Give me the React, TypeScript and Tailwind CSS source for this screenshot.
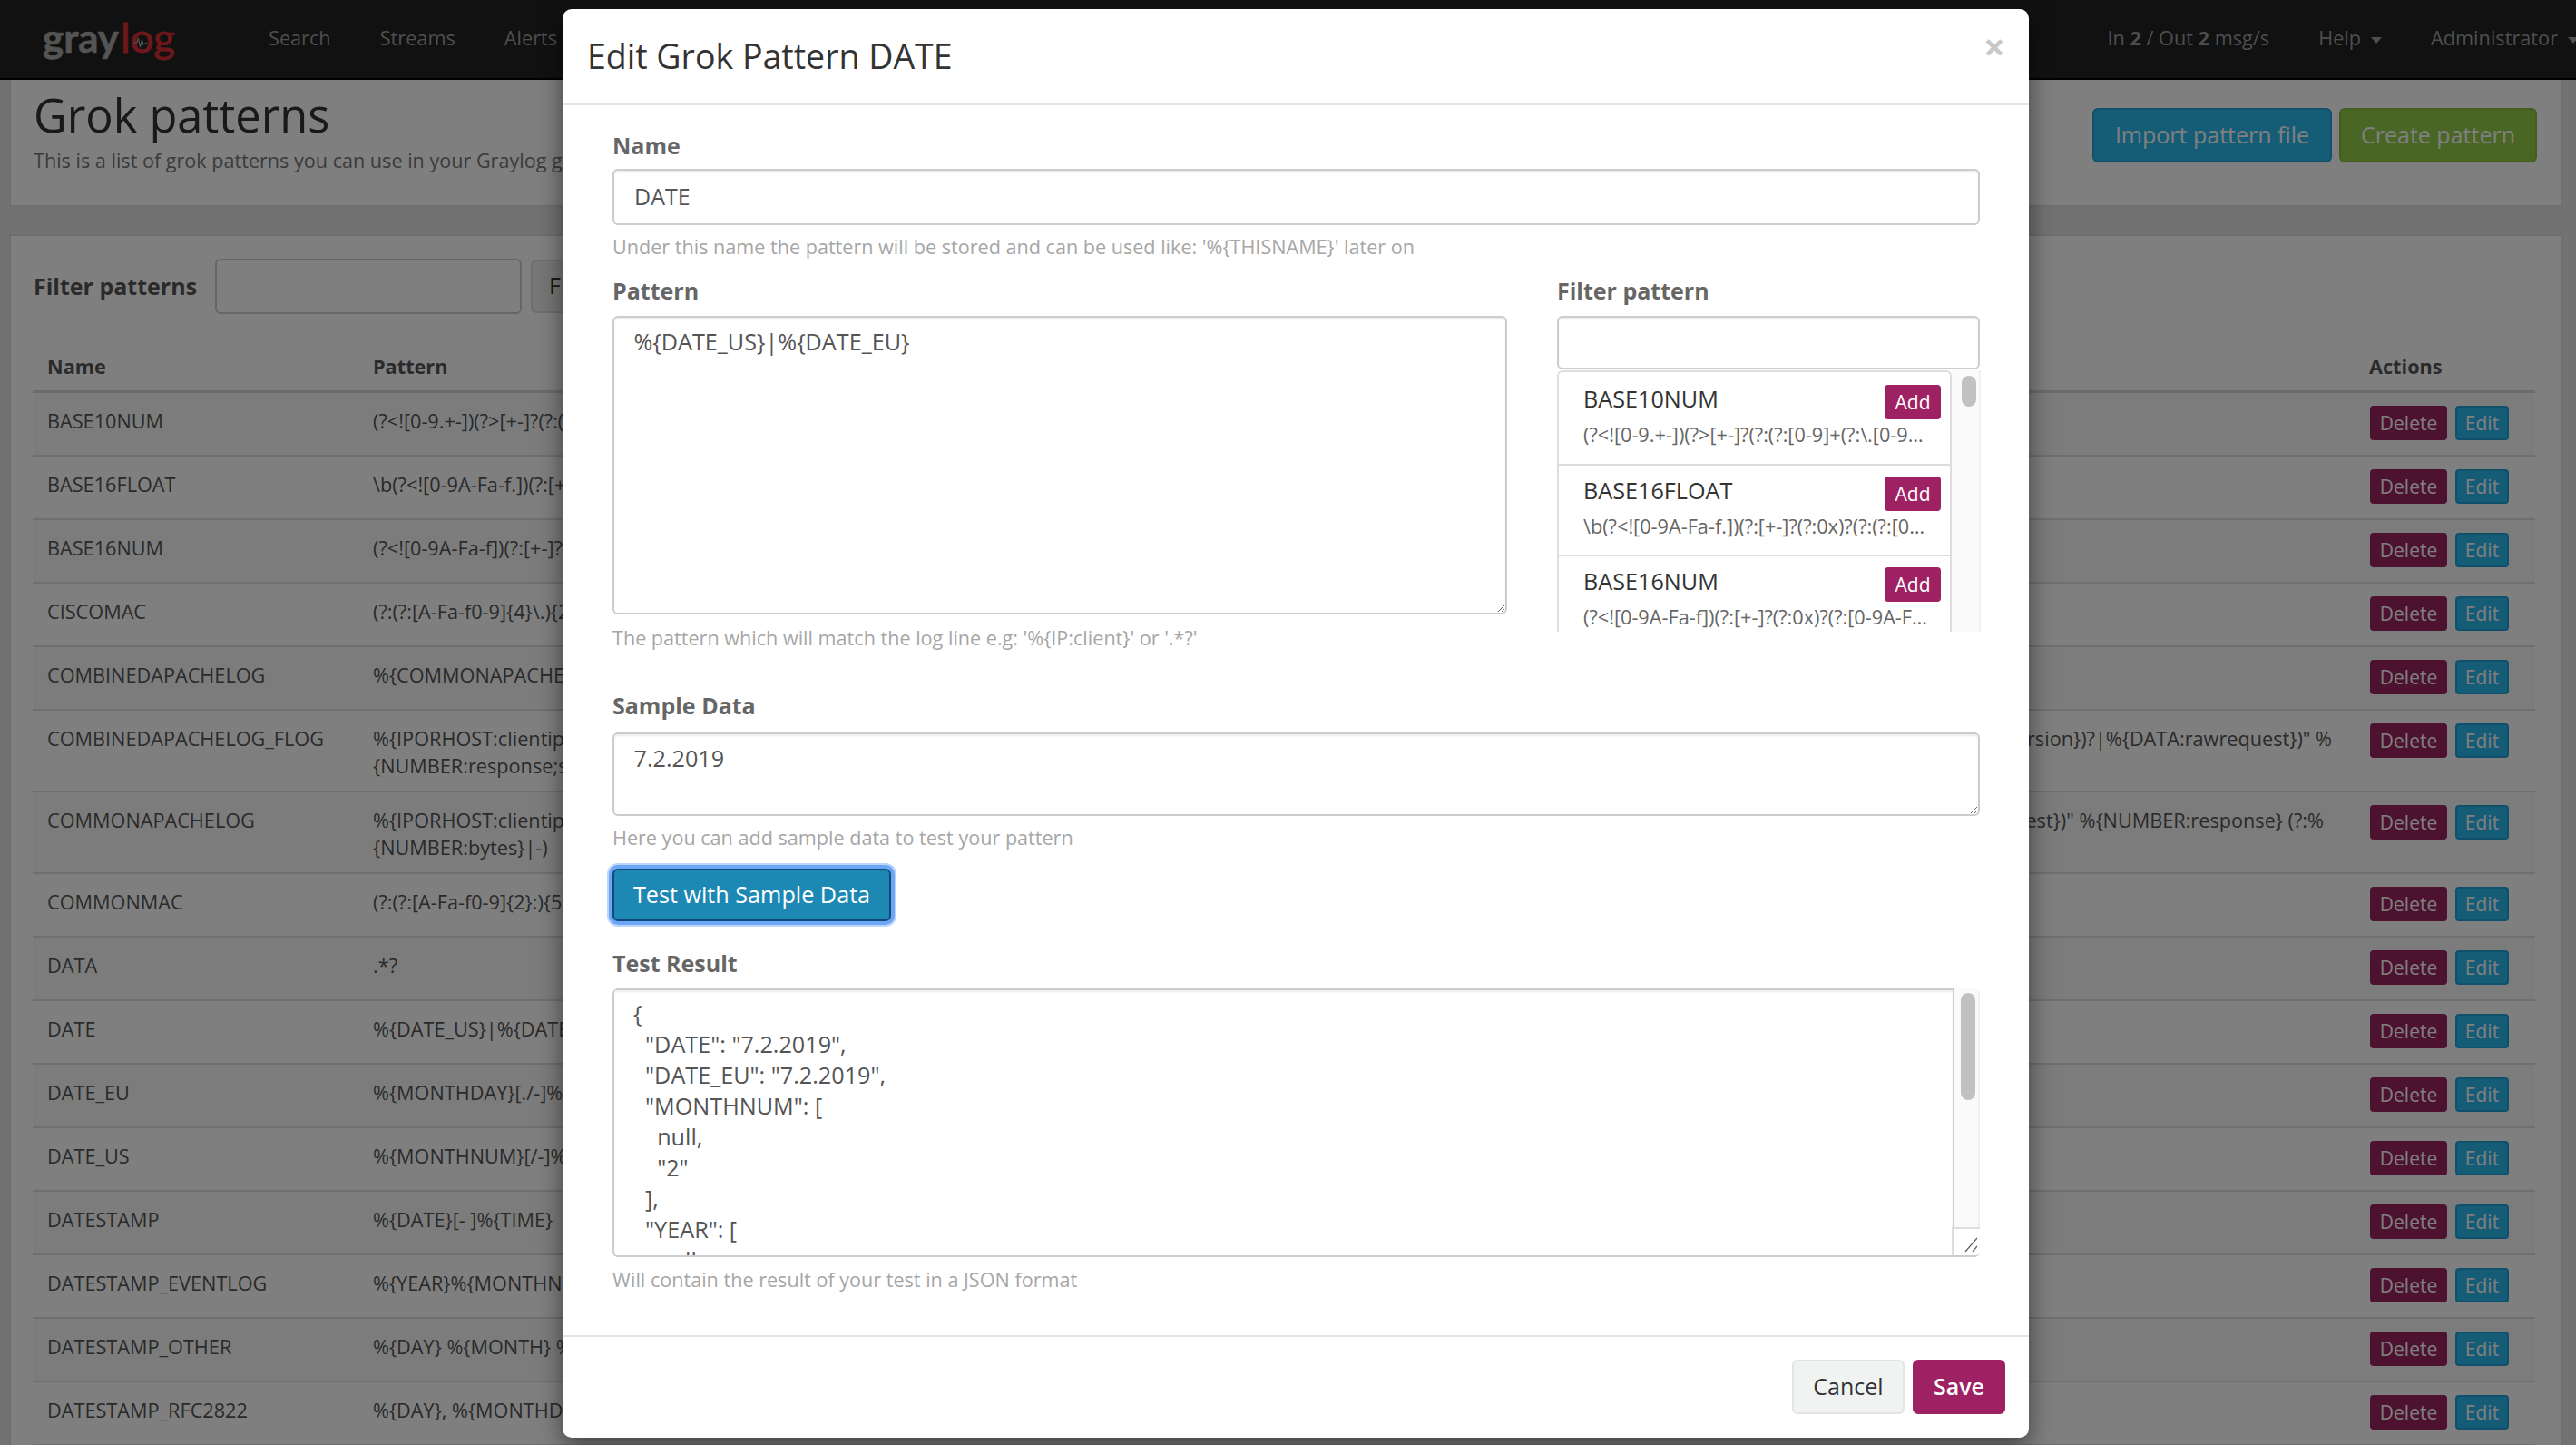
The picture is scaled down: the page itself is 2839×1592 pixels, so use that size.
import React from "react";

const rows: { name: string; lines: string[]; tail?: string; pr?: string }[] = [
  { name: "BASE10NUM", lines: ["(?<![0-9.+-])(?>[+-]?(?:(?:[0-9]+(?:\\.[0-9]+)?)|(?:\\.[0-9]+)))"] },
  { name: "BASE16FLOAT", lines: ["\\b(?<![0-9A-Fa-f.])(?:[+-]?(?:0x)?(?:(?:[0-9A-Fa-f]+(?:\\.[0-9A-Fa-f]*)?)|(?:\\.[0-9A-Fa-f]+)))\\b"] },
  { name: "BASE16NUM", lines: ["(?<![0-9A-Fa-f])(?:[+-]?(?:0x)?(?:[0-9A-Fa-f]+))"] },
  { name: "CISCOMAC", lines: ["(?:(?:[A-Fa-f0-9]{4}\\.){2}[A-Fa-f0-9]{4})"] },
  { name: "COMBINEDAPACHELOG", lines: ["%{COMMONAPACHELOG} %{QS:referrer} %{QS:agent}"] },
  {
    name: "COMBINEDAPACHELOG_FLOG",
    lines: [
      '%{IPORHOST:clientip} %{USER:ident;boolean} %{USER:auth} \\[%{HTTPDATE:timestamp;date;dd/MMM/yyyy:HH:mm:ss Z}\\] "(?:%{WORD:verb;string} %{URIPATHPARAM:request}(?: HTTP/%{NUMBER:httpve',
      "{NUMBER:response;string} (?:%{NUMBER:bytes;long}|-)",
    ],
    tail: 'rsion})?|%{DATA:rawrequest})" %',
    pr: "pr-[41px]",
  },
  {
    name: "COMMONAPACHELOG",
    lines: [
      '%{IPORHOST:clientip} %{USER:ident} %{USER:auth} \\[%{HTTPDATE:timestamp}\\] "(?:%{WORD:verb} %{NOTSPACE:request}(?: HTTP/%{NUMBER:httpversion})?|%{DATA:rawrequ',
      "{NUMBER:bytes}|-)",
    ],
    tail: 'est})" %{NUMBER:response} (?:%',
    pr: "pr-[50px]",
  },
  { name: "COMMONMAC", lines: ["(?:(?:[A-Fa-f0-9]{2}:){5}[A-Fa-f0-9]{2})"] },
  { name: "DATA", lines: [".*?"] },
  { name: "DATE", lines: ["%{DATE_US}|%{DATE_EU}"] },
  { name: "DATE_EU", lines: ["%{MONTHDAY}[./-]%{MONTHNUM}[./-]%{YEAR}"] },
  { name: "DATE_US", lines: ["%{MONTHNUM}[/-]%{MONTHDAY}[/-]%{YEAR}"] },
  { name: "DATESTAMP", lines: ["%{DATE}[- ]%{TIME}"] },
  { name: "DATESTAMP_EVENTLOG", lines: ["%{YEAR}%{MONTHNUM2}%{MONTHDAY}%{HOUR}%{MINUTE}%{SECOND}"] },
  { name: "DATESTAMP_OTHER", lines: ["%{DAY} %{MONTH} %{MONTHDAY} %{TIME} %{TZ} %{YEAR}"] },
  { name: "DATESTAMP_RFC2822", lines: ["%{DAY}, %{MONTHDAY} %{MONTH} %{YEAR} %{TIME} %{ISO8601_TIMEZONE}"] },
];

const grokList = [
  { name: "BASE10NUM", desc: "(?<![0-9.+-])(?>[+-]?(?:(?:[0-9]+(?:\\.[0-9]+)?)|(?:\\.[0-9]+)))", h: "h-[101px]", t: "pt-[14px]" },
  { name: "BASE16FLOAT", desc: "\\b(?<![0-9A-Fa-f.])(?:[+-]?(?:0x)?(?:(?:[0-9A-Fa-f]+(?:\\.[0-9A-Fa-f]*)?)", h: "h-[100px]", t: "pt-[12px]" },
  { name: "BASE16NUM", desc: "(?<![0-9A-Fa-f])(?:[+-]?(?:0x)?(?:[0-9A-Fa-f]+))", h: "h-[100px]", t: "pt-[12px]" },
];

const json = `{
  "DATE": "7.2.2019",
  "DATE_EU": "7.2.2019",
  "MONTHNUM": [
    null,
    "2"
  ],
  "YEAR": [
    null,`;

function Caret() {
  return <span className="ml-[11px] inline-block h-0 w-0 border-x-[6.5px] border-t-[7px] border-x-transparent border-t-current align-middle" />;
}

function Logo() {
  return (
    <svg width="150" height="50" viewBox="0 0 150 50" className="block">
      <text x="0" y="36" fontFamily="Lato, sans-serif" fontWeight="700" fontSize="44" fill="#a8a8a8" stroke="#a8a8a8" strokeWidth="0.6" textLength="84" lengthAdjust="spacingAndGlyphs">gray</text>
      <text x="86" y="36" fontFamily="Lato, sans-serif" fontWeight="400" fontSize="44" fill="#dc2f35" stroke="#dc2f35" strokeWidth="0.8" textLength="60" lengthAdjust="spacingAndGlyphs">log</text>
      <polyline points="100,25 104,25 105.5,20 107.5,30 109.5,22 111,27 115,25" fill="none" stroke="#a8a8a8" strokeWidth="1.2" />
    </svg>
  );
}

function Label({ children, className = "" }: { children: React.ReactNode; className?: string }) {
  return <label className={`block h-[36px] text-[25px] font-bold leading-[33px] text-[#666] ${className}`}>{children}</label>;
}

function Help({ children, className = "" }: { children: React.ReactNode; className?: string }) {
  return <p className={`h-[36px] text-[21.6px] leading-[33px] text-[#a6a6a6] ${className}`}>{children}</p>;
}

export default function App() {
  return (
    <div className="relative h-[1592px] w-[2839px] overflow-hidden bg-[#e4e4e4] font-['Open_Sans',sans-serif] text-[#333]">
      <nav className="flex h-[88px] items-start justify-between border-b-2 border-black bg-[#222] pl-[47px] text-[21.7px] leading-[84px] text-[#9d9d9d]">
        <div className="flex items-start">
          <div className="mt-[22px] mr-[99px]"><Logo /></div>
          <div className="flex gap-[54px]">
            <span>Search</span>
            <span>Streams</span>
            <span>Alerts</span>
          </div>
        </div>
        <div className="mr-[-3px] flex gap-[54px]">
          <span>In <b>2</b> / Out <b>2</b> msg/s</span>
          <span>Help<Caret /></span>
          <span>Administrator<Caret /></span>
        </div>
      </nav>

      <section className="mr-[15px] ml-[10px] flex h-[140px] justify-between border-2 border-t-0 border-[#dcdcdc] bg-white pr-[26px] pl-[25px]">
        <div className="pt-[9px]">
          <h1 className="text-[50.5px] leading-[60px] font-normal text-[#333]">Grok patterns</h1>
          <p className="mt-[5px] text-[21.6px] leading-[30px] text-[#777]">This is a list of grok patterns you can use in your Graylog grok extractors. You can add your own manually or import a whole list of patterns from a so called pattern file.</p>
        </div>
        <div className="flex shrink-0 gap-[8px] pt-[31px]">
          <button className="h-[60px] w-[264px] rounded-[6px] border-2 border-[#1fa2d6] bg-[#2ab8ee] text-[25px] text-white">Import pattern file</button>
          <button className="h-[60px] w-[218px] rounded-[6px] border-2 border-[#86bb40] bg-[#94cc4a] text-[25px] text-white">Create pattern</button>
        </div>
      </section>

      <section className="mt-[30px] mr-[15px] ml-[10px] h-[1400px] border-2 border-[#dcdcdc] bg-white pt-[24px] pr-[28px] pl-[24px]">
        <div className="flex h-[62px] items-center">
          <span className="w-[201px] pl-[1px] text-[25px] font-bold leading-[57px] text-[#555]">Filter patterns</span>
          <input className="h-[61px] w-[338px] rounded-[6px] border-2 border-[#ccc] bg-white" />
          <button className="ml-[10px] h-[59px] w-[120px] rounded-[6px] border-2 border-[#ddd] bg-[#eee] px-[18px] text-left text-[25px] text-[#333]">Filter</button>
        </div>
        <div className="flex h-[87px] items-end border-b-[3px] border-[#d8d8d8] pb-[11px] text-[21.7px] font-bold leading-[30px] text-[#555]">
          <div className="w-[375px] pl-[16px]">Name</div>
          <div className="flex-1">Pattern</div>
          <div className="w-[183px]">Actions</div>
        </div>
        {rows.map((r, i) => (
          <div
            key={r.name}
            className={`flex border-b-2 border-[#dedede] pt-[14px] text-[21.7px] leading-[30px] text-[#555] ${r.lines.length > 1 ? "h-[90px]" : "h-[70px]"} ${i % 2 === 0 ? "bg-[#f9f9f9]" : "bg-white"}`}
          >
            <div className="w-[375px] shrink-0 pt-[2px] pl-[16px]">{r.name}</div>
            <div className={`min-w-0 flex-1 whitespace-nowrap pt-[2px] ${r.pr ?? ""}`}>
              {r.lines.map((l, j) =>
                j === 0 && r.tail ? (
                  <div key={l} className="flex justify-between">
                    <span className="min-w-0 overflow-hidden">{l}</span>
                    <span className="shrink-0">{r.tail}</span>
                  </div>
                ) : (
                  <div key={l}>{l}</div>
                )
              )}
            </div>
            <div className="flex w-[183px] shrink-0 gap-[9px] pl-[1px]">
              <button className="h-[38px] w-[85px] rounded-[4px] bg-[#9a2460] text-[21px] leading-[36px] text-white">Delete</button>
              <button className="h-[38px] w-[59px] rounded-[4px] border-2 border-[#1fa2d6] bg-[#2ab8ee] text-[21px] leading-[32px] text-white">Edit</button>
            </div>
          </div>
        ))}
      </section>

      <div className="absolute inset-0 bg-black/50" />

      <div className="absolute top-[10px] left-[620px] flex h-[1574px] w-[1616px] flex-col rounded-[10px] bg-white shadow-[0_9px_27px_rgba(0,0,0,0.5)]">
        <header className="flex h-[106px] shrink-0 justify-between border-b-2 border-[#e5e5e5] pr-[26px] pl-[27px]">
          <h2 className="pt-[29px] text-[37.5px] leading-[46px] font-normal text-[#333]">Edit Grok Pattern DATE</h2>
          <span className="pt-[18px] text-[42px] leading-[46px] font-bold text-[#c8c8c8]">×</span>
        </header>

        <div className="flex-1 pt-[28px] pr-[54px] pl-[55px]">
          <Label className="mb-[6px]">Name</Label>
          <input readOnly value="DATE" className="h-[62px] w-full rounded-[6px] border-2 border-[#ccc] px-[22px] pb-[3px] text-[25px] text-[#555] shadow-[inset_0_2px_2px_rgba(0,0,0,0.075)] outline-none" />
          <Help className="mt-[7px]">Under this name the pattern will be stored and can be used like: '%{"{"}THISNAME{"}"}' later on</Help>

          <div className="mt-[13px] flex gap-[55px]">
            <div className="w-[986px] shrink-0">
              <Label className="mb-[8px]">Pattern</Label>
              <textarea readOnly value="%{DATE_US}|%{DATE_EU}" className="block h-[329px] w-full resize-y rounded-[6px] border-2 border-[#ccc] px-[21.5px] py-[8px] text-[25.2px] leading-[36px] text-[#555] shadow-[inset_0_2px_2px_rgba(0,0,0,0.075)] outline-none" />
              <Help className="mt-[9px]">The pattern which will match the log line e.g: '%{"{"}IP:client{"}"}' or '.*?'</Help>
            </div>
            <div className="w-[466px] shrink-0">
              <Label className="mb-[8px]">Filter pattern</Label>
              <input className="block h-[59px] w-[466px] rounded-[6px] border-2 border-[#ccc] shadow-[inset_0_2px_2px_rgba(0,0,0,0.075)] outline-none" />
              <div className="mt-[1px] flex h-[288px] w-[467px] overflow-hidden">
                <ul className="h-[400px] w-[435px] shrink-0 rounded-t-[6px] border-2 border-[#ddd]">
                  {grokList.map((g, i) => (
                    <li key={g.name} className={`${g.h} ${g.t} pr-[10px] pl-[27px] ${i > 0 ? "border-t-2 border-[#ddd]" : ""}`}>
                      <div className="flex items-start justify-between">
                        <span className="text-[25.2px] leading-[31px] text-[#333]">{g.name}</span>
                        <button className="h-[38px] w-[62px] rounded-[4px] bg-[#9e2163] text-[21px] font-medium leading-[36px] text-white">Add</button>
                      </div>
                      <div className="mt-[2px] w-[379px] truncate text-[21.7px] leading-[30px] text-[#666]">{g.desc}</div>
                    </li>
                  ))}
                </ul>
                <div className="h-full w-[32px] border-x-2 border-l-0 border-[#f0f0f0] bg-[#fafafa] pt-[6px] pl-[11px]">
                  <div className="h-[34px] w-[16px] rounded-[8px] bg-[#c1c1c1]" />
                </div>
              </div>
            </div>
          </div>

          <Label className="mt-[39px] mb-[10px]">Sample Data</Label>
          <textarea readOnly value="7.2.2019" className="block h-[92px] w-full resize-y rounded-[6px] border-2 border-[#ccc] px-[21.5px] py-[8px] text-[25.2px] leading-[36px] text-[#555] shadow-[inset_0_2px_2px_rgba(0,0,0,0.075)] outline-none" />
          <Help className="mt-[7px]">Here you can add sample data to test your pattern</Help>

          <button className="mt-[15px] block h-[58px] w-[307px] rounded-[6px] border-2 border-[#0f4a78] bg-[#1e88b4] text-[25.2px] text-white shadow-[0_0_0_4px_#6ea6f7,0_0_0_6px_#bcd5fb]">Test with Sample Data</button>

          <Label className="mt-[30px] mb-[8px]">Test Result</Label>
          <div className="relative flex h-[296px] overflow-hidden rounded-[6px] border-b-2 border-l-2 border-[#ccc]">
            <pre className="h-full flex-1 overflow-hidden border-t-2 border-r-2 border-[#ccc] px-[21px] pt-[8px] font-['Open_Sans',sans-serif] text-[25.2px] leading-[34px] text-[#555] shadow-[inset_0_2px_2px_rgba(0,0,0,0.075)]">{json}</pre>
            <div className="w-[28px] shrink-0 border-r-2 border-[#f0f0f0] bg-[#fafafa] pt-[5px] pl-[7px]">
              <div className="h-[118px] w-[16px] rounded-[8px] bg-[#c1c1c1]" />
            </div>
            <div className="absolute right-0 bottom-0 h-[31px] w-[31px] border-t-2 border-l-2 border-[#ddd] bg-white">
              <svg width="27" height="27" viewBox="0 0 27 27" className="block">
                <path d="M13 25 L26 10 M21 25 L26 19" stroke="#666" strokeWidth="1.3" fill="none" />
              </svg>
            </div>
          </div>
          <Help className="mt-[8px]">Will contain the result of your test in a JSON format</Help>
        </div>

        <footer className="flex h-[113px] shrink-0 justify-end gap-[9px] border-t-2 border-[#e5e5e5] pt-[25px] pr-[26px]">
          <button className="h-[60px] w-[124px] rounded-[6px] border-2 border-[#e3e5e4] bg-[#f1f3f2] text-[25px] text-[#333]">Cancel</button>
          <button className="h-[60px] w-[102px] rounded-[6px] bg-[#9e2163] text-[25px] font-semibold text-white">Save</button>
        </footer>
      </div>
    </div>
  );
}
